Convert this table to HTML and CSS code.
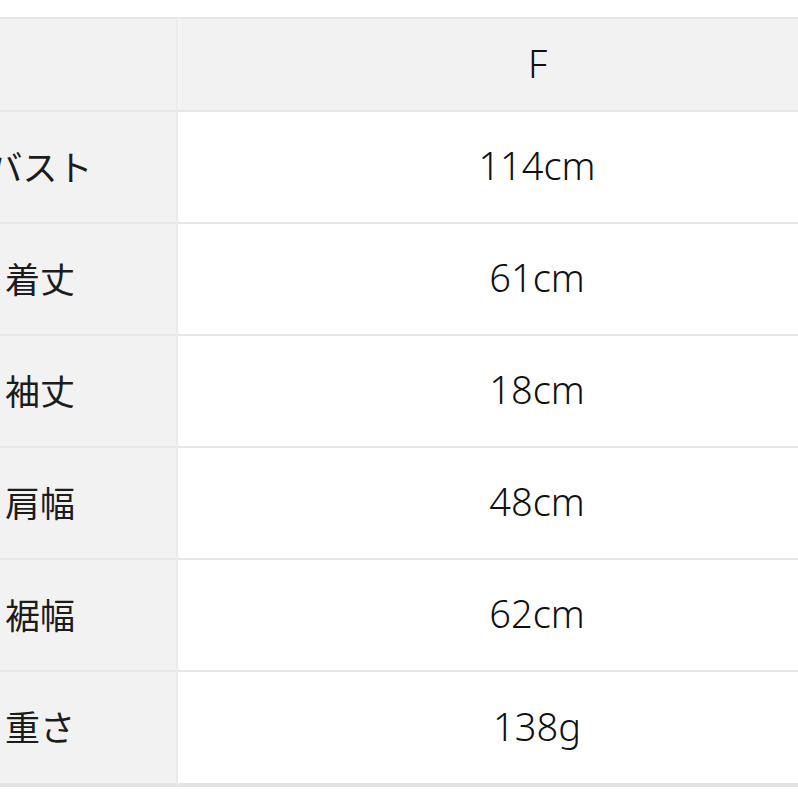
FILE: index.html
```html
<!DOCTYPE html>
<html lang="ja">
<head>
<meta charset="utf-8">
<link rel="stylesheet" href="styles.css">
</head>
<body>
<div class="sheet">
  <div class="grid">
    <div class="cell label head"></div>
    <div class="cell value head">F</div>
    <div class="cell label">バスト</div>
    <div class="cell value">114cm</div>
    <div class="cell label">着丈</div>
    <div class="cell value">61cm</div>
    <div class="cell label">袖丈</div>
    <div class="cell value">18cm</div>
    <div class="cell label">肩幅</div>
    <div class="cell value">48cm</div>
    <div class="cell label">裾幅</div>
    <div class="cell value">62cm</div>
    <div class="cell label last">重さ</div>
    <div class="cell value last">138g</div>
  </div>
</div>
</body>
</html>
```
FILE: styles.css
```css
html, body {
  margin: 0;
  padding: 0;
  background: #ffffff;
  overflow: hidden;
  width: 798px;
  height: 798px;
}
.sheet {
  padding-top: 17px;
  width: 798px;
  overflow: hidden;
}
.grid {
  display: grid;
  grid-template-columns: 274px 718px;
  grid-template-rows: 93px repeat(5, 112px) 117px;
  margin-left: -96px;
  width: 992px;
  font-family: "Noto Sans", "Noto Sans CJK JP", sans-serif;
  font-size: 38px;
  font-weight: 300;
  color: #111111;
}
.cell {
  box-sizing: border-box;
  border-top: 2px solid #e6e6e6;
  display: flex;
  align-items: center;
  justify-content: center;
  padding-bottom: 4px;
}
.label {
  background: #f2f2f2;
  border-right: 2px solid #ebebeb;
  font-family: "Noto Sans CJK JP", sans-serif;
  font-size: 35px;
  font-weight: 400;
  color: #1c1c1c;
}
.value {
  background: #ffffff;
}
.head {
  background: #f2f2f2;
}
.value.head {
  border-left: 1px solid #f7f7f7;
}
.last {
  border-bottom: 4px solid #e3e3e3;
}
```
